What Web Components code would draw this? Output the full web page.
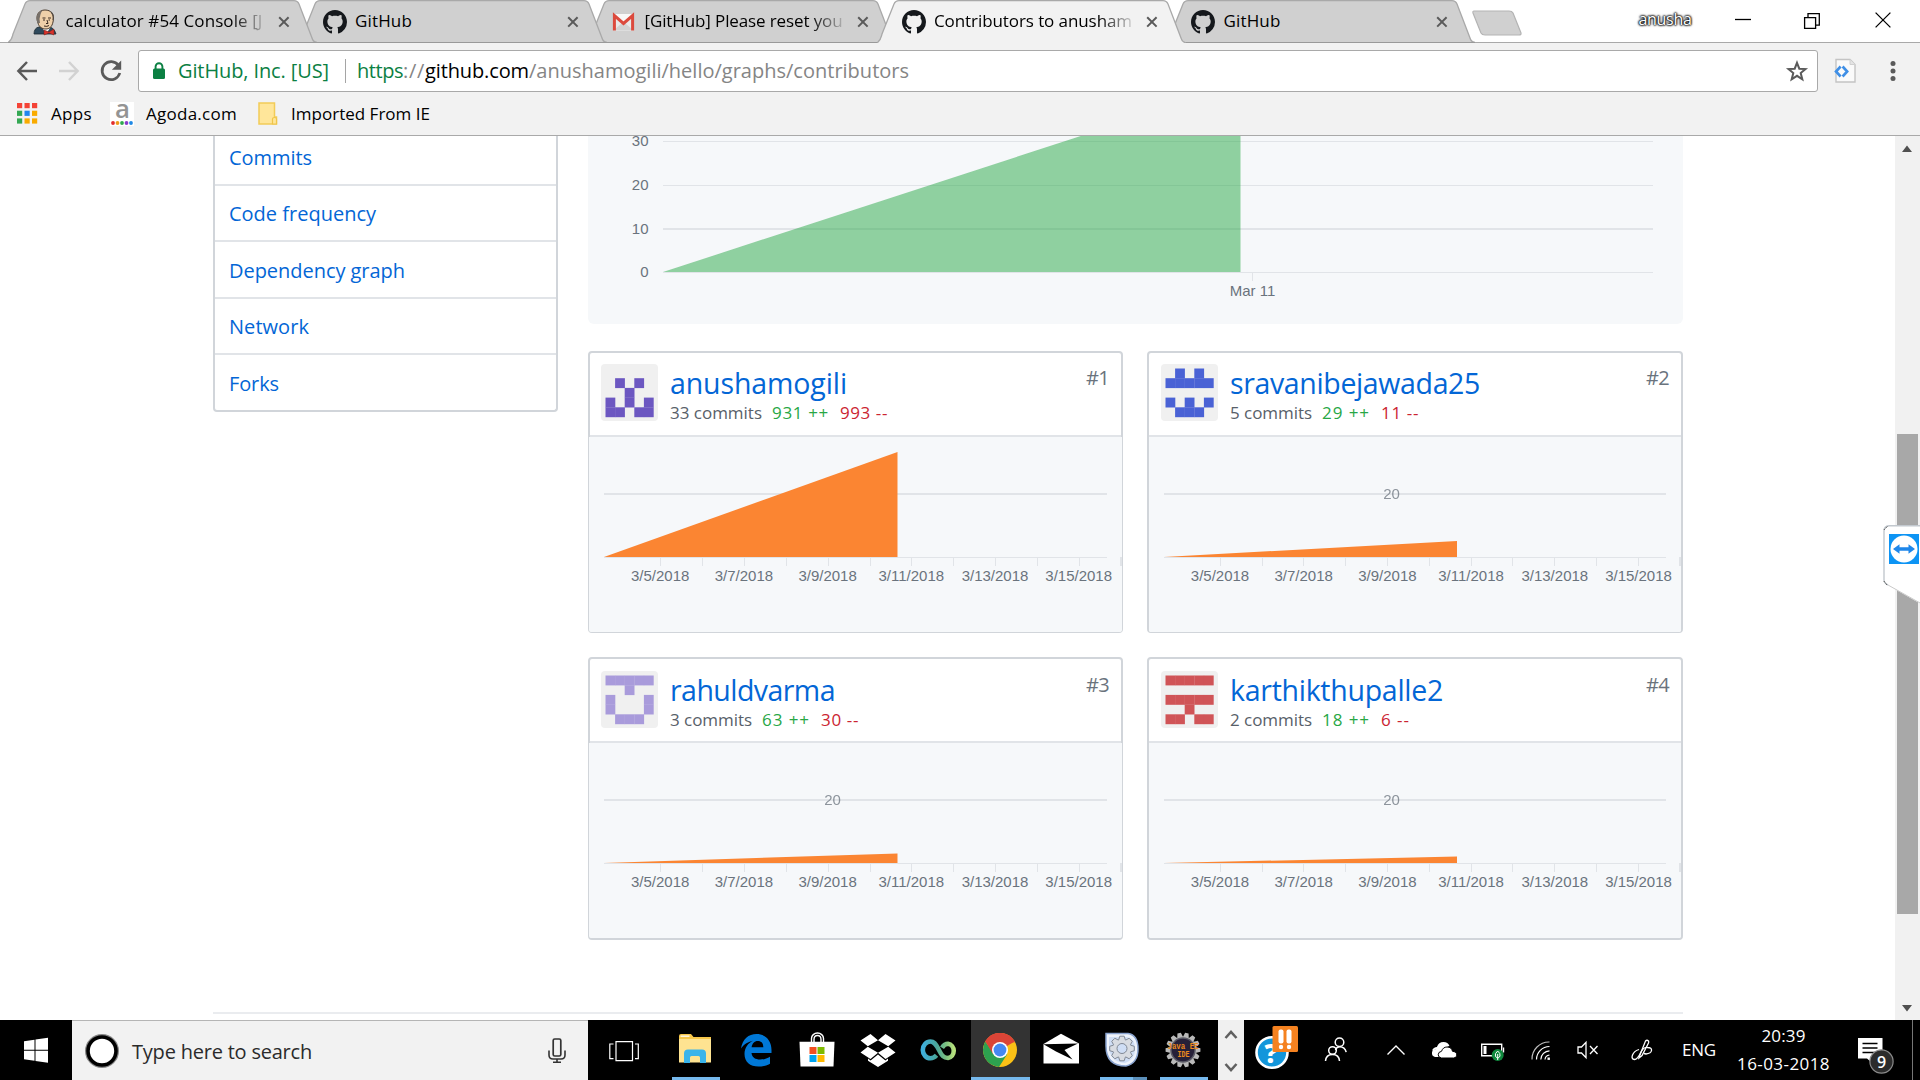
<!DOCTYPE html>
<html lang="en">
<head>
<meta charset="utf-8">
<title>Contributors to anushamogili/hello</title>
<style>
html,body{margin:0;padding:0;width:1920px;height:1080px;overflow:hidden;background:#fff;font-family:"Open Sans","Noto Sans",sans-serif}
</style>
</head>
<body>
<app-screen></app-screen>
<script>
const OCTO='M8 0C3.58 0 0 3.58 0 8c0 3.54 2.29 6.53 5.47 7.59.4.07.55-.17.55-.38 0-.19-.01-.82-.01-1.49-2.01.37-2.53-.49-2.69-.94-.09-.23-.48-.94-.82-1.13-.28-.15-.68-.52-.01-.53.63-.01 1.08.58 1.23.82.72 1.21 1.87.87 2.33.66.07-.52.28-.87.51-1.07-1.78-.2-3.64-.89-3.64-3.95 0-.87.31-1.59.82-2.15-.08-.2-.36-1.02.08-2.12 0 0 .67-.21 2.2.82.64-.18 1.32-.27 2-.27.68 0 1.36.09 2 .27 1.53-1.04 2.2-.82 2.2-.82.44 1.1.16 1.92.08 2.12.51.56.82 1.27.82 2.15 0 3.07-1.87 3.75-3.65 3.95.29.25.54.73.54 1.48 0 1.07-.01 1.93-.01 2.2 0 .21.15.46.55.38A8.013 8.013 0 0016 8c0-4.42-3.58-8-8-8z';
// gear outline with n teeth between radii r and R
const gear=(cx,cy,r,R,n)=>{let p='';for(let i=0;i<n;i++){const a=i*2*Math.PI/n,s=Math.PI/n;[[r,-.95],[R,-.45],[R,.45],[r,.95]].forEach(([q,k],j)=>{p+=(i||j?'L':'M')+(cx+q*Math.cos(a+k*s)).toFixed(2)+' '+(cy+q*Math.sin(a+k*s)).toFixed(2)})}return p+'Z'};
// name: [width, height, markup]
const ICONS={
octo:[24,24,`<path transform="scale(1.5)" fill="#15181c" d="${OCTO}"/>`],
jenkins:[24,26,`<path d="M1 25q0-6 5-7l8-1q7 1 9 8z" fill="#2f4a5c" stroke="#1b2730" stroke-width=".8"/><path d="M9 18l4 7 4-6z" fill="#fff"/><path d="M5 14C2 6 6 1 12 1s10 4 8 12c-1 5-4 7-7 7-4 0-7-2-8-6z" fill="#efd0a9" stroke="#4a3a2c" stroke-width="1"/><path d="M4.500 14C2 7 5 2 10 1.300c-3 2.700-2.500 5.700-3.500 8.700l.5 4z" fill="#777069"/><path d="M18 3q3 3 2 8" fill="none" stroke="#554c44" stroke-width="1.2"/><path d="M9.500 9h3M15 9h3M10 11h2M15.500 11h1.500M14 11l1 3.500h-2M11 17q3 1 5-.5" stroke="#3a2a20" stroke-width="1" fill="none"/><path d="M11 21l5 2 5-3v6l-5-2-5 2z" fill="#d8342c" stroke="#7c1a15" stroke-width=".5"/>`],
gmail:[24,24,`<rect x="1.5" y="4" width="20" height="16.5" fill="#e9e9e9"/><path d="M2 20l8-7h3l8 7z" fill="#d2d2d2"/><path d="M2 4.5l9.5 9 9.5-9-2-.5h-15z" fill="#f8f8f8"/><path d="M2.4 20.5V5.5l9.1 8 9.1-8v15" fill="none" stroke="#dc4a3d" stroke-width="3"/>`],
close:[12,12,'<path d="M1.2 1.2l9.4 9.4M10.6 1.2L1.2 10.6" stroke="#5a5a5a" stroke-width="2"/>'],
back:[24,24,'<path d="M22 12H4M12 3L3.4 12l8.600 9" fill="none" stroke="#5a5a5a" stroke-width="2.5"/>'],
fwd:[24,24,'<path d="M2 12h18M12 3l8.600 9-8.600 9" fill="none" stroke="#d2d2d2" stroke-width="2.5"/>'],
reload:[24,24,'<path d="M19.500 6.500A9 9 0 1 0 20.800 14" fill="none" stroke="#5a5a5a" stroke-width="2.700"/><path d="M22.200 1.500v9.300h-9.300z" fill="#5a5a5a"/>'],
lock:[14,20,'<rect x="1" y="7.500" width="12" height="10.500" rx="1.500" fill="#0b8043"/><path d="M3.600 8V5.600a3.400 3.400 0 0 1 6.800 0V8" fill="none" stroke="#0b8043" stroke-width="1.900"/>'],
star:[22,22,'<path d="M11 2.800l2.300 5.900 6.200.4-4.800 4 1.600 6.200-5.300-3.500-5.300 3.500 1.600-6.200-4.800-4 6.200-.4z" fill="none" stroke="#5a5a5a" stroke-width="2"/>'],
ext:[24,26,'<path d="M3 1.500h14l5 5V24H3z" fill="#fafafa" stroke="#c4c4c4" stroke-width="1.400"/><path d="M17 1.500v5h5" fill="#e4e4e4" stroke="#d0d0d0"/><path d="M7.600 8.500L3 13.500l4.600 5M9.600 8.500l4.600 5-4.600 5" fill="none" stroke="#3f8fe6" stroke-width="2.600"/>'],
dots:[6,24,'<g fill="#5a5a5a"><circle cx="3" cy="4.500" r="2.500"/><circle cx="3" cy="12" r="2.500"/><circle cx="3" cy="19.500" r="2.500"/></g>'],
apps:[21,21,[['#f44336','#f44336','#f44336'],['#34a853','#2186f0','#f9ab00'],['#34a853','#f9ab00','#f9ab00']].map((r,j)=>r.map((c,i)=>`<rect x="${i*7.500}" y="${j*7.700}" width="5.200" height="5.200" fill="${c}"/>`).join('')).join('')],
agoda:[24,24,'<rect width="24" height="24" fill="#fff"/><text x="12.500" y="16" text-anchor="middle" font-family="Open Sans" font-weight="600" font-size="25" textLength="15" lengthAdjust="spacingAndGlyphs" fill="#949494">a</text>'+['#e12d2d','#f09a1a','#2fa84f','#8a3ccc','#1e88e5'].map((c,i)=>`<circle cx="${3+i*4.500}" cy="21" r="1.900" fill="${c}"/>`).join('')],
folder:[20,23,'<path d="M1 1h15.500v14h2v7H1z" fill="#ffe69a" stroke="#f2cc58" stroke-width="1.500"/><path d="M14.500 22v-5q0-1.500 2-1.500t2 1.500v5z" fill="#ffe69a" stroke="#efc54a" stroke-width="1.200"/>'],
min:[16,16,'<path d="M0 7.500h16" stroke="#000" stroke-width="1.300"/>'],
restore:[16,16,'<path d="M.6 4.600h11v10.800H.6zM4 4.500V.7h11.300v11.500h-3.500" fill="none" stroke="#000" stroke-width="1.300"/>'],
x:[16,16,'<path d="M.6.600l14.800 14.800M15.400.600L.6 15.400" stroke="#000" stroke-width="1.300"/>'],
win:[24,26,'<path d="M0 4.200l10.500-1.500v10H0zM11.500 2.500L24 .700v12H11.500zM0 13.700h10.500v10L0 22.300zM11.500 13.700H24v12l-12.500-1.800z" fill="#fff"/>'],
cortana:[36,36,'<circle cx="18" cy="18" r="15" fill="#fff" stroke="#858585" stroke-width="4"/><circle cx="18" cy="18" r="14" fill="#fff" stroke="#000" stroke-width="3.600"/>'],
mic:[18,26,'<rect x="5.200" y="1" width="7.600" height="17" rx="1.500" fill="none" stroke="#333" stroke-width="1.700"/><path d="M1 12.500v4.500q0 4 4 4h8q4 0 4-4v-4.500M9 21v3M5 24.300h8" fill="none" stroke="#333" stroke-width="1.600"/>'],
taskview:[30,22,'<path d="M7 1.600h16.500v19H7zM4.500 4H.8v14.600h3.700M26 4h3.300v14.600H26" fill="none" stroke="#fff" stroke-width="1.200"/>'],
explorer:[36,36,'<path d="M2 4q0-2 2-2h10l2.500 3H34v25H2z" fill="#f7c84b"/><path d="M2 7h32v23.500H2z" fill="#fee391"/><path d="M3.500 3.500h9v1.300h-9z" fill="#fff"/><path d="M7 31V21.500q0-4 4-4h14q4 0 4 4V31h-6v-5.500q0-1.500-1.500-1.500h-7q-1.500 0-1.500 1.500V31z" fill="#3ab4ea"/>'],
edge:[36,36,'<path d="M3 16.500C4.500 7 10.500 2 18.500 2 28 2 33.500 9 33.500 18v3H13.500c.5 4.500 4 6.500 8.500 6.500 4 0 7-1 10-2.800v7c-3.500 2-7.500 2.800-11.500 2.800C12 34.500 6.500 30 6.500 22c0-6 3.500-11 8.500-13.200C10.500 10 6 12 3 16.500zM13.600 15.200h11.700c0-4-1.800-6.200-5.500-6.200-3.500 0-5.500 2.400-6.200 6.200z" fill="#0078d7"/>'],
store:[36,36,'<path d="M12.500 10V6.500a6 5.500 0 0 1 12 0V10M15 10V7.500q0-4 3.500-4t3.500 4V10" fill="none" stroke="#fff" stroke-width="1.400"/><path d="M.5 9.800h35L34.500 34.500h-33z" fill="#fff"/><path d="M10.500 15h7v7h-7z" fill="#f25022"/><path d="M18.500 15h7v7h-7z" fill="#7fba00"/><path d="M10.500 23h7v7h-7z" fill="#00a4ef"/><path d="M18.500 23h7v7h-7z" fill="#ffb900"/>'],
dropbox:[36,36,'<g fill="#fff"><path d="M10.500 2l7.500 6.300L7.800 14.200.5 8.500zM25.500 2l10 6.500-7.300 5.700L18 8.300zM.5 20.500l7.300-5.800L18 20.800 10.500 27zM28.200 14.700l7.300 5.800-10 6.500-7.500-6.200zM8 26.600l2.600 1.800 7.400-5.900 7.400 5.900 2.600-1.800v2.200L18 35 8 28.800z"/></g>'],
infinity:[36,36,'<defs><linearGradient id="g"><stop offset="0" stop-color="#3fb0dd"/><stop offset=".45" stop-color="#4aa699"/><stop offset=".75" stop-color="#7cc080"/><stop offset="1" stop-color="#b6e07c"/></linearGradient></defs><path d="M15.500 23.800C13.500 26 11.800 26.800 9.500 26.800a7.600 8.300 0 0 1 0-16.800c3.200 0 5 2 8.200 8 3.300 6.500 5 8.500 9.300 8.500a6.500 7.200 0 0 0 0-14.300c-2.500 0-4.300 1.200-6 4" transform="translate(0 -.5)" fill="none" stroke="url(#g)" stroke-width="4.600"/>'],
chrome:[36,36,'<circle cx="18" cy="18" r="17" fill="#fbc116"/><path d="M18 18L3.280 9.500A17 17 0 0 1 32.720 9.500z" fill="#db4437"/><path d="M3.280 9.500A17 17 0 0 0 17 35l8-12.500L18 18 11 20z" fill="#2da14f"/><path d="M18 10.300h15.100A17 17 0 0 0 3.280 9.500L11 22z" fill="#db4437"/><circle cx="18" cy="18" r="8" fill="#fff"/><circle cx="18" cy="18" r="6.400" fill="#4688f1"/>'],
mail:[38,36,'<path d="M1.500 12L19 1.800 37 11.500V31.500h-35.500z" fill="#fff"/><path d="M1.500 12.200L36 11.500 22.500 18l8 9.500-16.500-8z" fill="#000"/>'],
settings:[36,36,`<path d="M2 1.500h22Q34 3 34 17T22 34Q2 34 2 14z" fill="#eef3fb" stroke="#8aa4cf" stroke-width="1.500"/><path d="M5 5h18q8 1.500 8 12T21 31Q5 30 5 14z" fill="#cfdef5"/><path d="${gear(18,16.500,9.200,12.500,8)}" fill="#d8dce2" stroke="#808894"/><circle cx="18" cy="16.500" r="5" fill="#cfdef5" stroke="#808894"/>`],
java:[40,36,`<path d="${gear(20,18,13.500,17.500,14)}" fill="#b9b9b9"/><circle cx="20" cy="18" r="12" fill="#262038" stroke="#5b5b66" stroke-width="1.500"/><g font-family="Liberation Mono" font-weight="bold" fill="#f08a1c" font-size="9.500" text-anchor="middle"><text x="20" y="17" textLength="31" lengthAdjust="spacingAndGlyphs">Java EE</text><text x="20.500" y="25" textLength="12" lengthAdjust="spacingAndGlyphs">IDE</text></g>`],
scroller:[26,60,'<path d="M7.500 18l5.500-6.200 5.500 6.200M7.500 44l5.500 6.200 5.500-6.200" fill="none" stroke="#606060" stroke-width="2.500"/>'],
help:[44,60,'<ellipse cx="17" cy="32.500" rx="15.500" ry="15.300" fill="#1296db" stroke="#fff" stroke-width="2.600"/><text x="16" y="43" text-anchor="middle" font-family="Open Sans" font-weight="800" font-size="26" fill="#fff">?</text><rect x="17.500" y="6" width="25.500" height="26" rx="1.500" fill="#f58220"/><g fill="#fff"><rect x="23.500" y="9.500" width="5" height="14" rx="2"/><rect x="31.500" y="9.500" width="5" height="14" rx="2"/><circle cx="26" cy="27" r="2.200"/><circle cx="34" cy="27" r="2.200"/></g>'],
people:[24,26,'<g fill="none" stroke="#fff" stroke-width="1.500"><circle cx="15.500" cy="6.300" r="4.300"/><path d="M11.500 14q1-3.300 4-3.300 5.500 0 6.700 5.500"/><circle cx="8.500" cy="14.500" r="3.800"/><path d="M1.500 25q.5-6.500 7-6.500t7 6.500"/></g>'],
caret:[20,12,'<path d="M1.500 10.500L10 2l8.500 8.500" fill="none" stroke="#fff" stroke-width="1.400"/>'],
cloud:[26,18,'<path d="M1 9.500Q2.500 6 6 6q1.500-5 6.500-5Q17 1 18.500 5" fill="#fff"/><path d="M4 16q-3.500-1-3-4.500T5 8.300Q7 3 12 3l5 2-8 11z" fill="#fff"/><path d="M10.500 17q-3.300-.5-3.300-3.200 0-3 3.300-3.500Q12 6 16 6q4.500 0 5.500 4.300 4.300.5 4.300 3.800 0 2.900-3.300 2.900z" fill="#fff" stroke="#000" stroke-width="1"/>'],
battery:[26,20,'<path d="M1.700 3.200h20v11.500h-20z" fill="none" stroke="#fff" stroke-width="1.400"/><path d="M23 6.500h1.200v5H23zM3.500 5h3v8h-3z" fill="#fff"/><circle cx="17.700" cy="14" r="6" fill="#10893e"/><path d="M17.700 10q3 2.500 2.300 5-1 2-2.300 2t-2.300-2q-.7-2.500 2.300-5zM17.700 13v6" fill="none" stroke="#fff" stroke-width="1"/>'],
wifi:[20,20,'<g fill="none" stroke="#fff" stroke-width="1.200"><path d="M1 18.500A17 17 0 0 1 18.500 1" opacity=".75"/><path d="M5.500 18.500A13 13 0 0 1 18.500 5.500"/><path d="M9.800 18.500a9 9 0 0 1 8.700-8.700"/><path d="M14 18.500a5 5 0 0 1 4.500-4.500"/></g><rect x="16.500" y="16.500" width="2.400" height="2.400" fill="#fff"/>'],
vol:[22,18,'<path d="M1 6h3.500L9 1.300v15.400L4.500 12H1zM13 5l7.500 8M20.500 5L13 13" fill="none" stroke="#fff" stroke-width="1.300"/>'],
pen:[22,22,'<g fill="none" stroke="#fff" stroke-width="1.300"><path d="M8.500 17L14.500 2q1.500-1.500 3 0 .5 1 0 2L11 16.500 8 19z"/><path d="M8 10.500q-5 1.500-6.500 5.500t2 4.500Q6.500 20.500 9.500 14t7-5.500q4.500 0 4 3t-5.500 3.500l-2-.5"/></g>'],
notif:[38,60,'<path d="M1 18h24.500v20.500H17v6l-7-6H1z" fill="#fff"/><path d="M5.500 23.500h15M5.500 28h15M5.500 32.500h15" stroke="#000" stroke-width="1.300"/><circle cx="24.500" cy="41.500" r="11.600" fill="#2b2b2b" stroke="#8b8b8b" stroke-width="1.200"/><text x="24.500" y="47.500" text-anchor="middle" font-family="Open Sans" font-weight="600" font-size="16" fill="#fff">9</text>'],
};
const define=(tag,css,render)=>customElements.define(tag,class extends HTMLElement{
  connectedCallback(){
    if(this.shadowRoot)return;
    const root=this.attachShadow({mode:'open'});
    const t=document.createElement('template');
    t.innerHTML=`<style>:host{box-sizing:border-box}*{box-sizing:border-box}${css}</style>${render(this)}`;
    root.append(t.content.cloneNode(true));
    if(this.localName==='fit-text'){
      // spread the label over its given width
      const s=root.querySelector('span'),w=+this.getAttribute('w'),n=this.textContent.length;
      if(w)s.style.letterSpacing=((w-s.getBoundingClientRect().width)/n).toFixed(3)+'px';
    }
  }
});
const A=(e,n,d='')=>e.getAttribute(n)??d;

define('fit-text',':host{display:block;white-space:pre}span{display:inline-block;white-space:pre}',()=>'<span><slot></slot></span>');
define('ui-icon',':host{display:block;flex:none}svg{display:block;overflow:visible}',e=>{const [w,h,m]=ICONS[A(e,'name')];return `<svg width="${w}" height="${h}" viewBox="0 0 ${w} ${h}">${m}</svg>`});

define('browser-tab',`:host{display:block;position:relative;flex:none;width:309px;height:43px;margin-right:-19.5px}
:host([active]){z-index:9!important}
.bg{position:absolute;left:0;top:0;z-index:-1;display:block}
.row{display:flex;align-items:center;height:42px;padding:1px 0 0 25px}
.t{width:199px;margin-left:8.500px;font-size:17px;line-height:26px;color:#000;margin-top:-1px}
.long{-webkit-mask-image:linear-gradient(90deg,#000 165px,rgba(0,0,0,.15) 198px);mask-image:linear-gradient(90deg,#000 165px,rgba(0,0,0,.15) 198px)}
.c{margin-left:13px}`,e=>{const a=e.hasAttribute('active');
 return `<svg class="bg" width="309" height="43"><path d="M0 ${a?43:42.5}C4 40 4 38 5 34L17 4Q18.500 .7 22 .7H286Q289.500 .7 291 4L304 38Q305 42 309 ${a?43:42.5}" fill="${a?'#f2f2f2':'#d0d0d0'}" stroke="#a9a9a9" stroke-width="1.300"/>${a?'':'<path d="M0 42.500h309" stroke="#999"/>'}</svg>
 <div class="row"><ui-icon name="${A(e,'icon')}"></ui-icon><div class="t${+A(e,'w')>100?' long':''}"><fit-text w="${A(e,'w')}">${A(e,'label')}</fit-text></div><ui-icon class="c" name="close"></ui-icon></div>`});

define('tab-strip',`:host{display:flex;height:43px;background:linear-gradient(#fff 42px,#a9a9a9 42px);padding-left:8px;position:relative;isolation:isolate}
browser-tab:nth-of-type(1){z-index:5}browser-tab:nth-of-type(2){z-index:4}browser-tab:nth-of-type(3){z-index:3}browser-tab:nth-of-type(5){z-index:1}
.new{margin:10px 0 0 16px;display:block;flex:none}
.who{margin:7px 0 0 116px;width:54px;font-size:16px;line-height:24px;color:#fff;text-shadow:0 0 2px #000,0 0 2px #000,0 0 2px #000,0 0 3px #333}
.w1{margin:12px 0 0 42px}.w2{margin:13px 0 0 53px}.w3{margin:12px 0 0 55px}`,()=>`
<browser-tab icon="jenkins" w="197" label="calculator #54 Console [J"></browser-tab>
<browser-tab icon="octo" w="57" label="GitHub"></browser-tab>
<browser-tab icon="gmail" w="198" label="[GitHub] Please reset you"></browser-tab>
<browser-tab active icon="octo" w="198" label="Contributors to anusham"></browser-tab>
<browser-tab icon="octo" w="57" label="GitHub"></browser-tab>
<svg class="new" width="51" height="27"><path d="M2 1h35q3 0 4 2l8 20q.5 2-2 2H13q-3 0-4-2L1 3q-.5-2 1-2z" fill="#d0d0d0" stroke="#b4b4b4" stroke-width="1.200"/></svg>
<fit-text class="who" w="53">anusha</fit-text>
<ui-icon class="w1" name="min"></ui-icon><ui-icon class="w2" name="restore"></ui-icon><ui-icon class="w3" name="x"></ui-icon>`);

define('browser-toolbar',`:host{display:flex;align-items:center;height:55px;background:#f2f2f2;padding-left:15px}
.b{margin-right:18px}.f{margin-right:18px}.r{margin-right:15px}
.box{display:flex;align-items:center;width:1680px;height:42px;background:#fff;border:1px solid #a9a9a9;border-radius:3px;padding-left:13px;font-size:20px;line-height:40px;color:#858585}
.g{color:#0b8043}.k{color:#000}.sec{margin-left:12px;width:151px}.div{width:1px;height:24px;background:#a5a5a5;margin:0 11px 0 16px}
.u{display:flex;flex:1}.s{margin-right:9px}.e{margin-left:15px}.d{margin-left:33px}`,()=>`
<ui-icon class="b" name="back"></ui-icon><ui-icon class="f" name="fwd"></ui-icon><ui-icon class="r" name="reload"></ui-icon>
<div class="box"><ui-icon name="lock"></ui-icon><fit-text class="sec g" w="151">GitHub, Inc. [US]</fit-text><span class="div"></span>
<div class="u"><fit-text class="g" w="46">https</fit-text><fit-text w="22">://</fit-text><fit-text class="k" w="104">github.com</fit-text><fit-text w="380">/anushamogili/hello/graphs/contributors</fit-text></div><ui-icon class="s" name="star"></ui-icon></div>
<ui-icon class="e" name="ext"></ui-icon><ui-icon class="d" name="dots"></ui-icon>`);

define('bookmark-bar',`:host{display:flex;align-items:center;height:38px;background:#f2f2f2;border-bottom:1px solid #a9a9a9;padding:0 0 6px 17px;font-size:17px;line-height:30px;color:#000;flex:none}
.a{margin:0 18px 0 13px}.b{margin:0 21px 0 12px}.c{margin-left:13px}`,()=>`
<ui-icon name="apps"></ui-icon><fit-text class="a" w="41">Apps</fit-text><ui-icon name="agoda"></ui-icon><fit-text class="b" w="91">Agoda.com</fit-text><ui-icon name="folder"></ui-icon><fit-text class="c" w="139">Imported From IE</fit-text>`);

define('side-nav',`:host{display:block;width:345px;border:2px solid #d1d5da;border-top:0;border-radius:0 0 4px 4px;height:276px;font-size:20px;line-height:52px;color:#0366d6}
div{display:flex;align-items:flex-end;padding-left:14px;border-bottom:2px solid #e1e4e8}
div:last-child{border:0}`,()=>[['Commits',83,50],['Code frequency',147,56],['Dependency graph',176,57],['Network',80,56],['Forks',50,55]].map(([t,w,h])=>`<div style="height:${h}px"><fit-text w="${w}">${t}</fit-text></div>`).join(''));

define('commit-chart',`:host{display:block;height:188px;background:#f6f8fa;border-radius:0 0 6px 6px}svg{display:block}
text{font:15px "Liberation Sans",Arial,sans-serif;fill:#6a737d}`,()=>`
<svg width="1095" height="188"><g fill="#e1e4e8"><rect x="75" y="5" width="990" height="1"/><rect x="75" y="49" width="990" height="1"/><rect x="75" y="92" width="990" height="2"/><rect x="75" y="136" width="990" height="1"/><rect x="664" y="136" width="1" height="9"/></g>
<path d="M75 136L652.500-52V136z" fill="#28a745" fill-opacity=".5"/>
<g text-anchor="end"><text x="60.500" y="10">30</text><text x="60.500" y="54">20</text><text x="60.500" y="98">10</text><text x="60.500" y="141">0</text></g><text x="664.500" y="160" text-anchor="middle">Mar 11</text></svg>`);

define('ident-icon',':host{display:block;flex:none}svg{display:block}',e=>{
 const c=A(e,'color');return `<svg width="57" height="57"><rect width="57" height="57" rx="4" fill="#f0f0f0"/>${A(e,'rows').split('/').map((r,y)=>[...r].map((v,x)=>v==='1'?`<rect x="${4.5+x*9.6}" y="${4.5+y*9.7}" width="9.800" height="9.900" fill="${c}"/>`:'').join('')).join('')}</svg>`});

define('contributor-card',`:host{display:flex;flex-direction:column;border:2px solid #d1d5da;border-radius:4px}
.h{display:flex;flex:none;height:84px;border-bottom:2px solid #e1e4e8;padding:var(--pt,11px) 0 0 12px}
:host([thin]) .h{padding-left:11px}
.m{flex:1;padding:5px 0 0 12px}.n{font-size:28.5px;line-height:28px;color:#0366d6}
.s{display:flex;font-size:17px;line-height:24px;color:#586069;margin-top:4px}
.a{color:#28a745;margin-left:10px}.d{color:#cb2431;margin-left:11px}.r{font-size:20px;line-height:26px;color:#6a737d;margin:1px 12px 0 0}
svg{display:block;flex:1;background:#f6f8fa;overflow:hidden;border-radius:0 0 2px 2px}
text{font:15px "Liberation Sans",Arial,sans-serif;fill:#6a737d;text-anchor:middle}`,e=>{
 const w=+A(e,'width'),thin=e.hasAttribute('thin'),m=thin?1:2,peak=+A(e,'peak'),px=+A(e,'px');
 const x0=(thin?16:17)-m,x1=w-(thin?16:17)-m,t0=(thin?72:72.800)-m;let ticks='';
 for(let i=0;i<12;i++)ticks+=`<rect x="${Math.round(t0+i*(thin?41.910:41.800))-(i===11?1:0)}" y="120" width="${i===11?2:1}" height="9"/>`;
 const dates=['3/5/2018','3/7/2018','3/9/2018','3/11/2018','3/13/2018','3/15/2018'].map((d,i)=>`<text x="${(t0+.2+i*83.7).toFixed(1)}" y="143.5">${d}</text>`).join('');
 return `<div class="h"><ident-icon color="${A(e,'color')}" rows="${A(e,'rows')}"></ident-icon><div class="m"><fit-text class="n" w="${A(e,'nw')}">${A(e,'name')}</fit-text><div class="s"><fit-text w="${A(e,'cw')}">${A(e,'commits')}</fit-text><fit-text class="a" w="${A(e,'aw')}">${A(e,'add')} ++</fit-text><fit-text class="d" w="${A(e,'dw')}">${A(e,'del')} --</fit-text></div></div><fit-text class="r" w="23">#${A(e,'rank')}</fit-text></div>
 <svg style="${thin?'margin:0 -1px;width:'+(w-2)+'px':'width:'+(w-4)+'px'}"><g fill="#e1e4e8"><rect x="${x0}" y="56" width="${x1-x0}" height="2"/><rect x="${x0}" y="120" width="${x1-x0}" height="1"/>${ticks}</g>${A(e,'rank')==='1'?'':`<text x="${244.5-m}" y="62" opacity=".75">20</text>`}<path d="M${x0} 120L${px-m} ${120-peak}V120z" fill="#fb8532"/>${dates}</svg>`});

define('scroll-bar',':host{display:block;width:25px;background:#f1f1f1}svg{display:block}',()=>'<svg width="25" height="884"><path d="M7 16l5-6.500 5 6.500zM7 869l5 6.500 5-6.500z" fill="#505050"/><rect x="2" y="298" width="21" height="480" fill="#a8a8a8"/></svg>');

define('remote-badge',':host{display:block;position:absolute;left:1883px;top:525px;z-index:5}svg{display:block}',()=>`<svg width="37" height="80"><path d="M38 .6H6Q.7 1 .7 6V55q0 3 4 5L38 79z" fill="#fff"/><path d="M38 .7H6Q1 1 1 6V55q0 3 4 5" fill="none" stroke="#c2c8ce" stroke-width="1.400"/><path d="M.8 5L5 .8M.8 56L4 60" stroke="#555" stroke-width="1" stroke-dasharray="2 1"/><path d="M5 60l33 18.500" stroke="#c9c9c9" stroke-width="1"/><rect x="6" y="9" width="30" height="30" fill="#0d94f4"/><circle cx="21" cy="24" r="13.500" fill="#fff"/><path d="M10 24l6.500-4.800v3h9v-3L32 24l-6.500 4.800v-3h-9v3z" fill="#1f87ea"/></svg>`);

define('page-view',`:host{display:flex;height:884px;overflow:hidden;background:#fff;flex:none}
.p{width:1895px;padding-left:213px}.cols{display:flex;gap:30px}.main{width:1095px}
.grid{display:grid;grid-template-columns:535px 536px;column-gap:24px;grid-template-rows:282px 283px;row-gap:24px;margin-top:27px}
.grid>:nth-child(-n+2){border-bottom-width:1px}.grid>:nth-child(n+3){--pt:12px}
.foot{height:2px;width:1470px;background:#eaecef;margin-top:72px}`,()=>`
<div class="p"><div class="cols"><side-nav></side-nav><div class="main"><commit-chart></commit-chart><div class="grid">
<contributor-card thin width="535" rank="1" name="anushamogili" nw="177" commits="33 commits" cw="92" add="931" aw="57" del="993" dw="48" color="#6c57c1" rows="00000/01010/00100/10101/11011" peak="105" px="309.500"></contributor-card>
<contributor-card width="536" rank="2" name="sravanibejawada25" nw="250" commits="5 commits" cw="82" add="29" aw="48" del="11" dw="38" color="#4a62d5" rows="01010/11111/00000/10101/01110" peak="16" px="310"></contributor-card>
<contributor-card thin width="535" rank="3" name="rahuldvarma" nw="165" commits="3 commits" cw="82" add="63" aw="48" del="30" dw="38" color="#a99bdb" rows="11111/00100/10001/10001/01110" peak="9.600" px="309.500"></contributor-card>
<contributor-card width="536" rank="4" name="karthikthupalle2" nw="213" commits="2 commits" cw="82" add="18" aw="48" del="6" dw="29" color="#d05457" rows="11111/00000/11111/00100/11011" peak="6.500" px="310"></contributor-card>
</div></div></div><div class="foot"></div></div><scroll-bar></scroll-bar>`);

define('task-button',`:host{display:flex;position:relative;width:61px;height:60px;align-items:center;justify-content:center;flex:none}
:host([active])::before{content:"";position:absolute;inset:0 1px;background:#333}
ui-icon{position:relative;left:-1px}
i{position:absolute;bottom:0;height:3px;left:6.500px;width:48px;background:#76b9ed}
:host([active]) i{left:1px;width:59px}:host([stack]) i{left:8px;width:47px;background:linear-gradient(90deg,#76b9ed 33px,#5b8fba 33px)}`,e=>`<ui-icon name="${A(e,'icon')}"></ui-icon>${e.hasAttribute('open')?'<i></i>':''}`);

define('task-bar',`:host{display:flex;height:60px;background:#000;color:#fff;flex:none;align-items:center}
.w{margin:0 24px}.search{display:flex;align-items:center;width:516px;height:60px;background:#f2f2f2;border-top:1px solid #b5b5b5;padding-left:12px}
.q{flex:1;margin-left:12px;font-size:20px;line-height:30px;color:#2b2b2b;margin-top:2px}.mic{margin-right:22px}
.tv{margin:2px 26px 0 21px}.sc{background:#f0f0f0;margin-left:4px}
.ink{color:#fff;font-size:17px;line-height:28px}.clock{width:93px;margin-left:21px;display:flex;flex-direction:column;align-items:center}
.end{width:1px;height:60px;background:#777;margin-left:17px}`,()=>`
<ui-icon class="w" name="win"></ui-icon><div class="search"><ui-icon name="cortana"></ui-icon><fit-text class="q" w="180">Type here to search</fit-text><ui-icon class="mic" name="mic"></ui-icon></div>
<ui-icon class="tv" name="taskview"></ui-icon>
<task-button icon="explorer" open></task-button><task-button icon="edge"></task-button><task-button icon="store"></task-button><task-button icon="dropbox"></task-button><task-button icon="infinity"></task-button><task-button icon="chrome" active open></task-button><task-button icon="mail"></task-button><task-button icon="settings" open stack></task-button><task-button icon="java" open></task-button>
<ui-icon class="sc" name="scroller"></ui-icon>
<ui-icon style="margin-left:11px" name="help"></ui-icon><ui-icon style="margin:-2px 0 0 25px" name="people"></ui-icon><ui-icon style="margin-left:38px" name="caret"></ui-icon><ui-icon style="margin-left:25px" name="cloud"></ui-icon><ui-icon style="margin:2px 0 0 23px" name="battery"></ui-icon><ui-icon style="margin:2px 0 0 25px" name="wifi"></ui-icon><ui-icon style="margin-left:26px" name="vol"></ui-icon><ui-icon style="margin-left:32px" name="pen"></ui-icon>
<fit-text class="ink" style="margin-left:29px;width:34px" w="34">ENG</fit-text>
<div class="clock ink"><fit-text w="44">20:39</fit-text><fit-text w="93">16-03-2018</fit-text></div>
<ui-icon style="margin-left:27px" name="notif"></ui-icon><span class="end"></span>`);

define('app-screen',':host{display:flex;flex-direction:column;width:1920px;height:1080px;overflow:hidden;position:relative}tab-strip,browser-toolbar{flex:none}',()=>'<tab-strip></tab-strip><browser-toolbar></browser-toolbar><bookmark-bar></bookmark-bar><page-view></page-view><task-bar></task-bar><remote-badge></remote-badge>');
</script>
</body>
</html>
